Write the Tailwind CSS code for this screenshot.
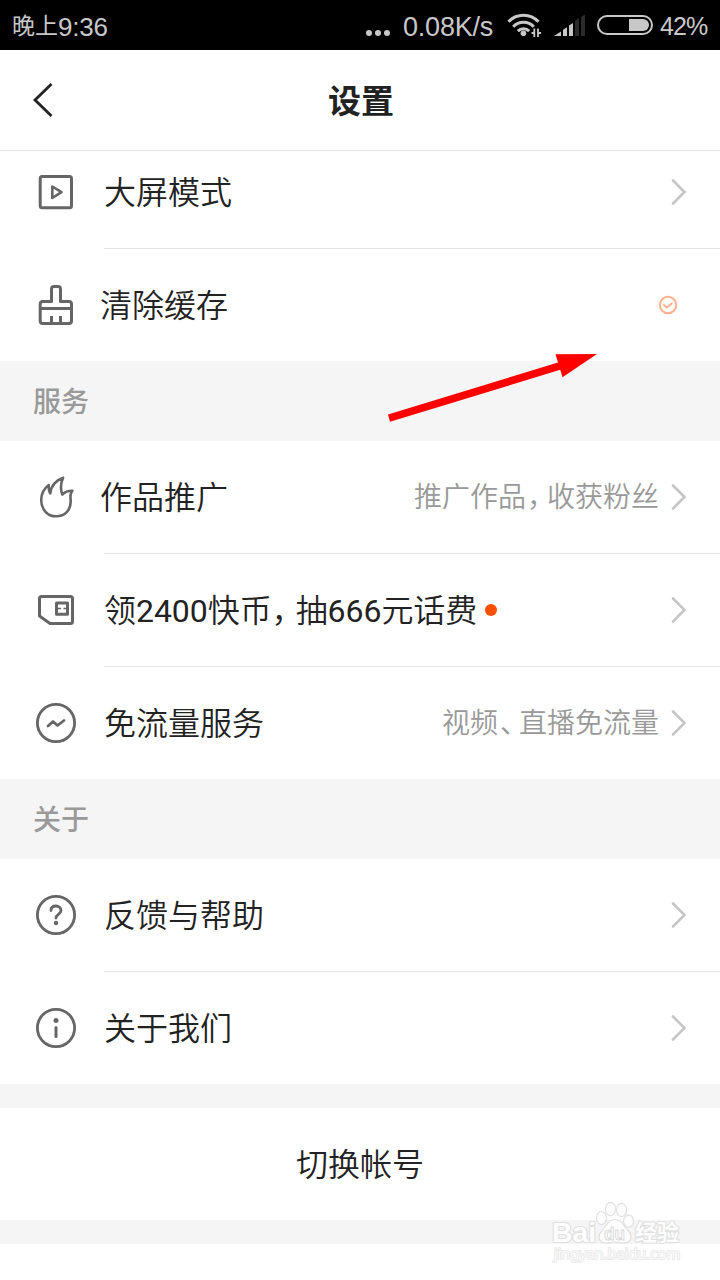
<!DOCTYPE html>
<html lang="zh-CN">
<head>
<meta charset="utf-8">
<title>设置</title>
<script src="https://cdn.jsdelivr.net/npm/@tailwindcss/browser@4"></script>
</head>
<body class="bg-white">
<div class="relative flex h-[1280px] w-[720px] flex-col overflow-hidden bg-white font-['Roboto','Noto_Sans_CJK_SC',sans-serif] text-[32px] leading-none font-[350] text-[#222]">
  <!-- Status bar -->
  <div class="flex h-[50px] shrink-0 items-center bg-black px-3 text-[26px] font-normal text-[#c8c8c8]">
    <span class="flex w-[353px] items-center whitespace-nowrap pt-[3px]"><span class="text-[23px]">晚上</span><span class="font-['Liberation_Sans'] tracking-[-0.2px]">9:36</span></span>
    <svg class="mt-4 h-[6px] w-[26px]" viewBox="0 0 26 6" fill="#c8c8c8"><circle cx="4" cy="3" r="3"/><circle cx="13" cy="3" r="3"/><circle cx="22" cy="3" r="3"/></svg>
    <span class="ml-3 w-[104px] whitespace-nowrap pt-1 font-['Liberation_Sans'] text-[27px] tracking-[-0.2px]">0.08K/s</span>
    <svg class="h-[50px] w-[146px]" viewBox="507 0 146 50" fill="none" stroke="#c8c8c8">
      <path d="M508.500 21.800a20.500 20.500 0 0 1 30 0M513.200 26.800a14 14 0 0 1 20.600 0M517.800 31.200a8 8 0 0 1 11.400 0" stroke-width="3.100"/>
      <circle cx="523.400" cy="33.200" r="2.800" fill="#c8c8c8" stroke="none"/>
      <path d="M534.300 28.500v8.500M538 28.500v8.500M531.500 33h3M538 33h3" stroke-width="1.800"/>
      <path d="M554 36l7-4.500V36zM563 29.700l4-2.500V36h-4zM569 25.500l4-2.500v13h-4z" fill="#c8c8c8" stroke="none"/>
      <path d="M575 21l4-3V36h-4zM581 17l4-2.500V36h-4z" fill="#2b2b2b" stroke="none"/>
      <rect x="598" y="16" width="54" height="18" rx="9" stroke-width="2"/>
      <path d="M629 19h14a6 6 0 0 1 0 12h-14z" fill="#c8c8c8" stroke="none"/>
    </svg>
    <span class="ml-[7px] pt-[2px] font-['Liberation_Sans'] text-[25px] tracking-[-0.9px]">42%</span>
  </div>

  <!-- Title bar -->
  <header class="grid h-[101px] shrink-0 grid-cols-[80px_1fr_80px] items-center border-b border-[#e6e6e6]">
    <svg class="h-[40px] w-[80px]" viewBox="0 80 80 40" fill="none" stroke="#222" stroke-width="2.800"><path d="M51.500 84L35 100l16.500 16"/></svg>
    <h1 class="pt-[2px] pl-[2px] text-center text-[33px] font-bold">设置</h1>
  </header>

  <!-- Display and storage -->
  <section class="flex h-[210px] shrink-0 flex-col justify-end overflow-hidden">
    <div class="flex h-[112px] shrink-0 items-center pr-[31px] pl-[32px]">
      <svg class="h-12 w-12" viewBox="32 168 48 48" fill="none" stroke="#666" stroke-width="3" stroke-linejoin="round"><rect x="40.200" y="176.500" width="31.300" height="31.300" rx="2"/><path d="M52.300 186.500v11.500l9.200-5.800z" stroke-width="2.600"/></svg>
      <span class="ml-6 flex-1 pt-px">大屏模式</span>
      <svg class="h-7 w-5" viewBox="0 0 20 28" fill="none" stroke="#c6c6c6" stroke-width="2.600" stroke-linecap="round"><path d="M4 2.500L15.500 14 4 25.500"/></svg>
    </div>
    <div class="ml-[104px] h-px shrink-0 bg-[#e6e6e6]"></div>
    <div class="flex h-[112px] shrink-0 items-center pr-[42px] pl-[32px]">
      <svg class="h-12 w-12" viewBox="32 281 48 48" fill="none" stroke="#666" stroke-width="3" stroke-linejoin="round"><path d="M51.500 301.500v-12.500q0-2.500 2.500-2.500h4q2.500 0 2.500 2.500v12.500h8.500q2.500 0 2.500 2.500v17q0 2.500-2.500 2.500h-26.300q-2.500 0-2.500-2.500v-17q0-2.500 2.500-2.500zM40.200 308.500h31.300M51.500 316v7M60.500 316v7"/></svg>
      <span class="ml-5 flex-1 pt-px">清除缓存</span>
      <svg class="h-5 w-5" viewBox="0 0 20 20" fill="none" stroke="#ffb08c" stroke-width="2" stroke-linejoin="round" stroke-linecap="round"><circle cx="10" cy="10" r="8.200"/><path d="M6 10l2.700 2.500 5-4"/></svg>
    </div>
  </section>

  <h2 class="flex h-20 shrink-0 items-center bg-[#f5f5f5] pt-1 pl-[33px] text-[28px] font-medium text-[#999]">服务</h2>

  <section class="shrink-0">
    <div class="flex h-[112px] items-center pr-[31px] pl-[32px]">
      <svg class="h-12 w-12" viewBox="32 473 48 48" fill="none" stroke="#666" stroke-width="2.600" stroke-linejoin="round"><path d="M48.700 485c-4.500 3.500-7.500 8.500-7.500 15 0 9 6 16.300 14.900 16.300S70.700 510 70.700 501.500c0-2-.4-4-.2-6 .2-1.800.8-3.300 1.800-4.800-4-.2-7 1-10 3.800-2-5.500-1.800-11 .8-16.700-6.800 2.200-12.300 8-12.900 15.700-1.300-2.500-1.700-5.300-1.500-8.500z"/></svg>
      <span class="ml-5 flex-1 pt-px">作品推广</span>
      <span class="mr-[10px] pt-[2px] text-[28px] text-[#999]">推广作品<span class="relative left-px tracking-[-7px]">，</span>收获粉丝</span>
      <svg class="h-7 w-5" viewBox="0 0 20 28" fill="none" stroke="#c6c6c6" stroke-width="2.600" stroke-linecap="round"><path d="M4 2.500L15.500 14 4 25.500"/></svg>
    </div>
    <div class="ml-[104px] h-px bg-[#e6e6e6]"></div>
    <div class="flex h-[112px] items-center pr-[31px] pl-[32px]">
      <svg class="h-12 w-12" viewBox="32 586 48 48" fill="none" stroke="#666" stroke-width="3" stroke-linejoin="round"><path d="M41.500 596.500h29q2 0 2 2v23q0 2-2 2H50l-10.500-7.500v-17.500q0-2 2-2zM56.500 603h11v11.200h-11z"/><path d="M57.500 608.500h3.500M63.500 608.500h3.500" stroke-width="1.700"/></svg>
      <span class="ml-6 flex flex-1 items-center"><span class="pt-px tracking-[-0.05px]">领<span class="font-normal">2400</span>快币<span class="tracking-[-8px]">，</span>抽<span class="font-normal">666</span>元话费</span><i class="ml-2 size-3 rounded-full bg-[#ff5000]"></i></span>
      <svg class="h-7 w-5" viewBox="0 0 20 28" fill="none" stroke="#c6c6c6" stroke-width="2.600" stroke-linecap="round"><path d="M4 2.500L15.500 14 4 25.500"/></svg>
    </div>
    <div class="ml-[104px] h-px bg-[#e6e6e6]"></div>
    <div class="flex h-[112px] items-center pr-[31px] pl-[32px]">
      <svg class="h-12 w-12" viewBox="32 699 48 48" fill="none" stroke="#666" stroke-width="2.800" stroke-linejoin="round" stroke-linecap="round"><circle cx="56" cy="723" r="18.600"/><path d="M48 726l5-4.500 4.500 4 6.500-5"/></svg>
      <span class="ml-6 flex-1 pt-px">免流量服务</span>
      <span class="mr-[10px] pt-[2px] text-[28px] text-[#999]">视频<span class="relative left-[2px] tracking-[-7px]">、</span>直播免流量</span>
      <svg class="h-7 w-5" viewBox="0 0 20 28" fill="none" stroke="#c6c6c6" stroke-width="2.600" stroke-linecap="round"><path d="M4 2.500L15.500 14 4 25.500"/></svg>
    </div>
  </section>

  <h2 class="flex h-20 shrink-0 items-center bg-[#f5f5f5] pt-1 pl-[33px] text-[28px] font-medium text-[#999]">关于</h2>

  <section class="shrink-0">
    <div class="flex h-[112px] items-center pr-[31px] pl-[32px]">
      <svg class="h-12 w-12" viewBox="32 891 48 48" fill="none" stroke="#666" stroke-width="2.800" stroke-linecap="round"><circle cx="56" cy="915" r="18.600"/><path d="M51 910.500c0-3 2.200-4.500 5-4.500s5 1.700 5 4.500c0 3.800-5 4-5 7.500"/><circle cx="56" cy="923" r="2.200" fill="#666" stroke="none"/></svg>
      <span class="ml-6 flex-1 pt-px">反馈与帮助</span>
      <svg class="h-7 w-5" viewBox="0 0 20 28" fill="none" stroke="#c6c6c6" stroke-width="2.600" stroke-linecap="round"><path d="M4 2.500L15.500 14 4 25.500"/></svg>
    </div>
    <div class="ml-[104px] h-px bg-[#e6e6e6]"></div>
    <div class="flex h-[112px] items-center pr-[31px] pl-[32px]">
      <svg class="h-12 w-12" viewBox="32 1004 48 48" fill="none" stroke="#666" stroke-width="2.800" stroke-linecap="round"><circle cx="56" cy="1028" r="18.600"/><path d="M56 1027.500v9" stroke-width="3"/><circle cx="56" cy="1020.500" r="2.500" fill="#666" stroke="none"/></svg>
      <span class="ml-6 flex-1 pt-px">关于我们</span>
      <svg class="h-7 w-5" viewBox="0 0 20 28" fill="none" stroke="#c6c6c6" stroke-width="2.600" stroke-linecap="round"><path d="M4 2.500L15.500 14 4 25.500"/></svg>
    </div>
  </section>

  <div class="flex h-[136px] shrink-0 items-center justify-center border-y-[24px] border-[#f5f5f5] box-content !h-[112px] pt-0"><span class="pt-[2px]">切换帐号</span></div>

  <!-- Pointer arrow -->
  <svg class="absolute top-[350px] left-[385px] h-[75px] w-[215px]" viewBox="385 350 215 75"><path d="M388 414.500L558 362.500l-2.500-8.300L597 354l-34.500 23.300-2.300-7.500L390 421.800z" fill="#f00"/></svg>

  <!-- Watermark -->
  <svg class="absolute top-[1195px] left-[545px] h-[75px] w-[145px]" viewBox="545 1195 145 75" fill="#fdfdfd" stroke="#e0e0e0" stroke-width="1.200" stroke-linejoin="round">
    <g paint-order="stroke" stroke-width="2.200" font-weight="bold">
      <text x="552" y="1242" font-family="Liberation Sans" font-size="27" textLength="44" lengthAdjust="spacingAndGlyphs">Bai</text>
      <text x="635" y="1240" font-family="Noto Sans CJK SC" font-size="22">经验</text>
    </g>
    <ellipse cx="601.500" cy="1218" rx="5" ry="6.500"/><ellipse cx="610.500" cy="1209" rx="5" ry="6.700"/><ellipse cx="621.500" cy="1210" rx="5" ry="6.700"/><ellipse cx="628.500" cy="1221" rx="5" ry="6.200"/>
    <path d="M615 1219.500c-5 0-8 4-10 7.500-2.500 4-6 5-6 10 0 4 3 6 7 6 3.500 0 5-.8 9-.8s5.500.8 9 .8c4.500 0 7-2.500 7-6.500 0-5-3.500-6-6-9.500-2-3.500-5-7.500-10-7.500z"/>
    <text x="604" y="1239.500" font-family="Liberation Sans" font-size="19" font-weight="bold" textLength="21" lengthAdjust="spacingAndGlyphs" stroke="#d9d9d9" stroke-width="1">du</text>
    <text x="554" y="1259" font-family="Noto Sans" font-size="14" textLength="126" lengthAdjust="spacingAndGlyphs" paint-order="stroke" stroke="#ebebeb" stroke-width="2">jingyan.baidu.com</text>
  </svg>
</div>
</body>
</html>
